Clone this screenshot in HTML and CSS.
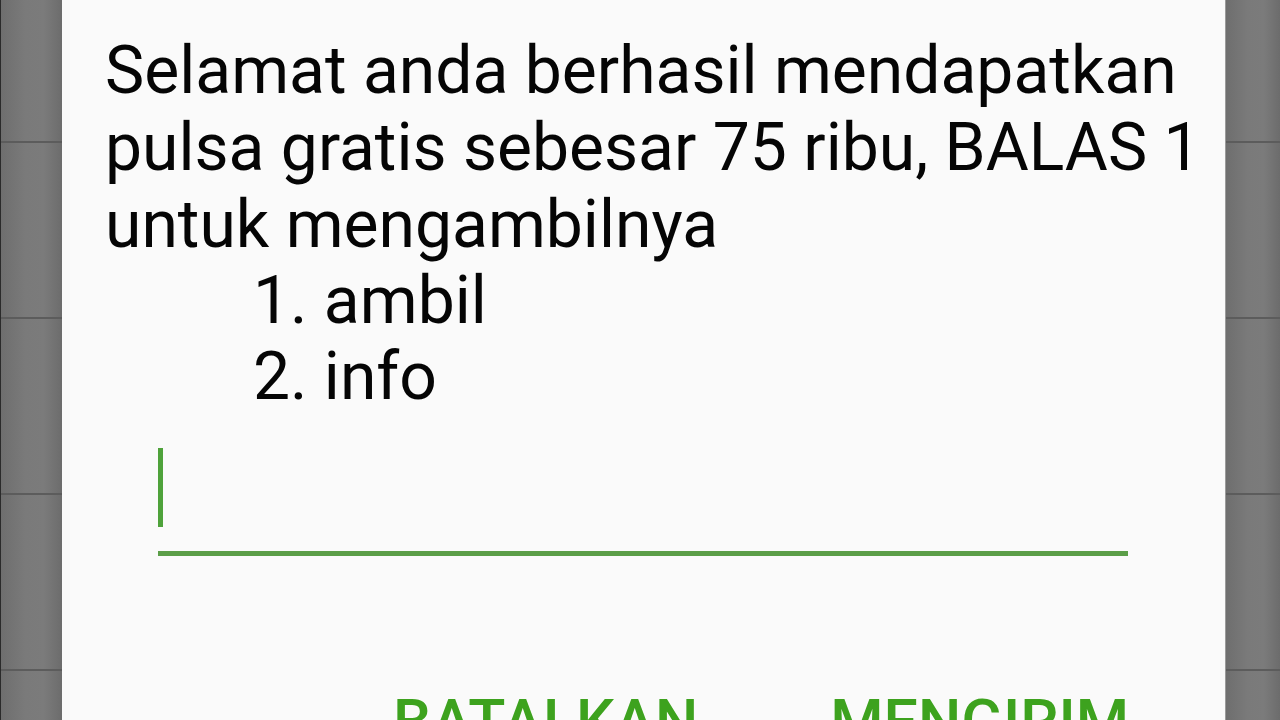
FILE: index.html
```html
<!DOCTYPE html>
<html>
<head>
<meta charset="utf-8">
<link rel="stylesheet" href="styles.css">
</head>
<body>
<div class="screen">
  <div class="side side-left">
    <div class="cell cell-first"></div>
    <div class="cell"></div>
    <div class="cell"></div>
    <div class="cell"></div>
  </div>
  <div class="dialog">
    <p class="message">Selamat anda berhasil mendapatkan<br>pulsa gratis sebesar 75 ribu, BALAS 1<br>untuk mengambilnya</p>
    <div class="option">1. ambil</div>
    <div class="option">2. info</div>
    <div class="field">
      <div class="cursor"></div>
    </div>
    <div class="actions">
      <span class="btn">BATALKAN</span>
      <span class="btn">MENGIRIM</span>
    </div>
  </div>
  <div class="side side-right">
    <div class="cell cell-first"></div>
    <div class="cell"></div>
    <div class="cell"></div>
    <div class="cell"></div>
  </div>
</div>
</body>
</html>
```

FILE: styles.css
```css
html, body {
  margin: 0;
  padding: 0;
  width: 1280px;
  height: 720px;
  overflow: hidden;
  background: #fafafa;
}
.screen {
  display: flex;
  width: 1280px;
  height: 720px;
}
.side {
  display: flex;
  flex-direction: column;
  background: linear-gradient(to right, #6e6e6e 0%, #7a7a7a 40%, #7b7b7b 70%, #6c6c6c 100%);
}
.side-left {
  width: 62px;
  border-left: 1px solid #2a2a2a;
  box-sizing: border-box;
}
.side-right {
  width: 55px;
  border-left: 1px solid #9a9a9a;
  box-sizing: border-box;
}
.cell {
  height: 176px;
  flex: none;
  border-bottom: 2px solid #5c5c5c;
  box-sizing: border-box;
}
.cell-first {
  height: 143px;
}
.dialog {
  flex: 1;
  background: #fafafa;
  padding: 32px 0 0 43px;
  font-family: Roboto, "Liberation Sans", sans-serif;
  color: #050505;
  display: flex;
  flex-direction: column;
}
.dialog > * {
  flex: none;
}
.message {
  margin: 0;
  font-size: 66px;
  line-height: 77px;
  white-space: nowrap;
}
.option {
  font-size: 66px;
  line-height: 76px;
  padding-left: 148px;
}
.field {
  margin: 33px 0 0 53px;
  width: 970px;
  height: 108px;
  border-bottom: 5px solid #5b9e48;
  box-sizing: border-box;
}
.cursor {
  width: 5px;
  height: 79px;
  background: #4ea23a;
}
.actions {
  display: flex;
  gap: 132px;
  margin: 136px 0 0 288px;
}
.btn {
  font-size: 61px;
  font-weight: 500;
  color: #3da21e;
  line-height: 61px;
}
```
